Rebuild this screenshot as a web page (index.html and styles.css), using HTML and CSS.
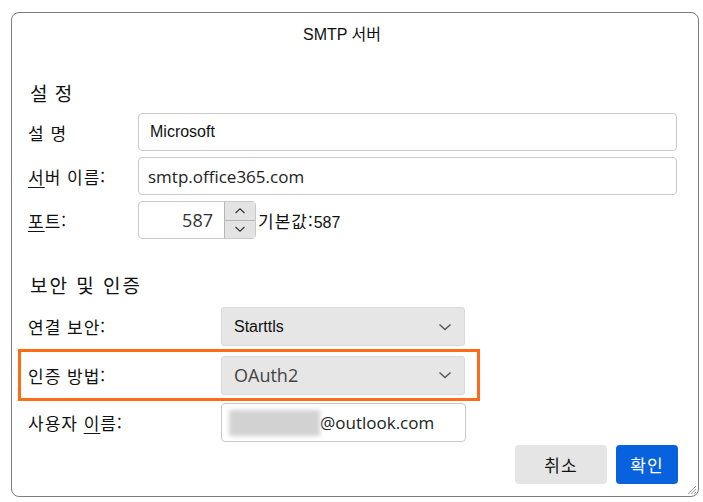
FILE: index.html
```html
<!DOCTYPE html>
<html lang="ko">
<head>
    <meta charset="UTF-8">
    <meta name="viewport" content="width=device-width, initial-scale=1.0">
    <title>SMTP 서버</title>
    <link rel="stylesheet" href="styles.css">
</head>
<body>
<div class="dialog">
    <div class="title">SMTP 서버</div>

    <div class="content">
        <div class="section-title">설 정</div>

        <div class="form-grid">
            <label for="desc">설 명</label>
            <input type="text" id="desc" class="form-control" value="Microsoft">

            <label for="server"><u>서</u>버 이름:</label>
            <input type="text" id="server" class="form-control server" value="smtp.office365.com">

            <label for="port"><u>포</u>트:</label>
            <div class="port-row">
                <div class="spin">
                    <span class="spin-value">587</span>
                    <div class="spin-buttons">
                        <span class="spin-btn">
                            <svg width="12" height="8" viewBox="0 0 12 8"><path d="M1.5 6 L6 1.8 L10.5 6" fill="none" stroke="#333" stroke-width="1.2"/></svg>
                        </span>
                        <span class="spin-btn">
                            <svg width="12" height="8" viewBox="0 0 12 8"><path d="M1.5 2 L6 6.2 L10.5 2" fill="none" stroke="#333" stroke-width="1.2"/></svg>
                        </span>
                    </div>
                </div>
                <span class="hint">기본값:<span class="num">587</span></span>
            </div>
        </div>

        <div class="section-title second">보안 및 인증</div>

        <div class="sec-row first">
            <label>연결 보안:</label>
            <div class="select">
                <span>Starttls</span>
                <svg width="14" height="8" viewBox="0 0 14 8"><path d="M1.5 1.5 L7 6.5 L12.5 1.5" fill="none" stroke="#555" stroke-width="1.4"/></svg>
            </div>
        </div>

        <div class="sec-row highlight">
            <label>인증 방법:</label>
            <div class="select oauth">
                <span>OAuth2</span>
                <svg width="14" height="8" viewBox="0 0 14 8"><path d="M1.5 1.5 L7 6.5 L12.5 1.5" fill="none" stroke="#555" stroke-width="1.4"/></svg>
            </div>
        </div>

        <div class="sec-row user">
            <label>사용자 <u>이</u>름:</label>
            <div class="user-input">
                <span class="blurred"></span>
                <span class="mail">@outlook.com</span>
            </div>
        </div>

        <div class="buttons">
            <button class="btn cancel">취소</button>
            <button class="btn ok">확인</button>
        </div>
    </div>

    <svg class="grip" width="12" height="12" viewBox="0 0 12 12">
        <path d="M11 3 L3 11 M11 6 L6 11 M11 9 L9 11" stroke="#999" stroke-width="1"/>
    </svg>
</div>
</body>
</html>
```

FILE: styles.css
```css
body {
    margin: 0;
    background-color: #ffffff;
    font-family: "Liberation Sans", "Noto Sans CJK KR", sans-serif;
    color: #111;
}

.dialog {
    position: relative;
    box-sizing: border-box;
    width: 688px;
    height: 485px;
    margin: 12px 0 0 11px;
    border: 1px solid #7c7c7c;
    border-radius: 8px;
    background-color: #fff;
}

.title {
    padding: 12px 26px 0 0;
    line-height: 20px;
    font-size: 16px;
    text-align: center;
}

.content {
    padding: 0 20px 0 16px;
}

.section-title {
    margin-top: 36px;
    padding-left: 2px;
    line-height: 24px;
    font-size: 19px;
    letter-spacing: 1px;
    font-family: "Noto Sans CJK KR", sans-serif;
}

.section-title.second {
    margin-top: 34px;
    letter-spacing: 2px;
}

label {
    font-family: "Noto Sans CJK KR", sans-serif;
    font-size: 17px;
    letter-spacing: 1px;
    color: #111;
}

u {
    text-underline-offset: 3px;
}

.form-grid {
    display: grid;
    grid-template-columns: 110px 539px;
    grid-auto-rows: 38px;
    row-gap: 6px;
    align-items: center;
    margin-top: 8px;
}

.form-control {
    box-sizing: border-box;
    height: 38px;
    width: 100%;
    padding: 0 11px;
    border: 1px solid #c9c9c9;
    border-radius: 4px;
    font-family: "Liberation Sans", sans-serif;
    font-size: 16px;
    color: #111;
}

.form-control.server {
    padding-left: 9px;
    font-family: "Open Sans", sans-serif;
    font-size: 17px;
    color: #222;
}

.port-row {
    display: flex;
    align-items: center;
    gap: 2px;
}

.spin {
    box-sizing: border-box;
    display: flex;
    width: 118px;
    height: 38px;
    border: 1px solid #c9c9c9;
    border-radius: 4px;
}

.spin-value {
    flex: 1;
    padding-right: 11px;
    text-align: right;
    line-height: 36px;
    font-family: "Open Sans", sans-serif;
    font-size: 18px;
    color: #333;
}

.spin-buttons {
    display: flex;
    flex-direction: column;
    width: 30px;
    border-left: 1px solid #b5b5b5;
}

.spin-btn {
    flex: 1;
    display: flex;
    align-items: center;
    justify-content: center;
    background-color: #e3e3e3;
}

.spin-btn + .spin-btn {
    border-top: 1px solid #b5b5b5;
}

.hint {
    font-family: "Noto Sans CJK KR", sans-serif;
    font-size: 17px;
    letter-spacing: 1px;
}

.hint .num {
    font-family: "Liberation Sans", sans-serif;
    font-size: 16px;
    letter-spacing: 0;
}

.sec-row {
    display: flex;
    align-items: center;
    height: 39px;
}

.sec-row label {
    width: 193px;
}

.sec-row.first {
    margin-top: 10px;
}

.select {
    box-sizing: border-box;
    display: flex;
    align-items: center;
    justify-content: space-between;
    width: 244px;
    height: 39px;
    padding: 0 12px 0 12px;
    border: 1px solid #dadada;
    border-radius: 3px;
    background-color: #e6e6e6;
    font-size: 16px;
}

.select.oauth span {
    font-family: "Open Sans", sans-serif;
    font-size: 18px;
    color: #444;
}

.highlight {
    box-sizing: border-box;
    width: 462px;
    height: 52px;
    margin: 3px 0 0 -10px;
    padding: 0 12px 0 7px;
    border: 3px solid #ff6b17;
}

.user {
    margin-top: 2px;
}

.user-input {
    box-sizing: border-box;
    display: flex;
    align-items: center;
    width: 245px;
    height: 39px;
    padding-left: 7px;
    border: 1px solid #c9c9c9;
    border-radius: 4px;
    overflow: hidden;
}

.blurred {
    width: 91px;
    height: 26px;
    background-color: #d2d2d2;
    filter: blur(2px);
}

.mail {
    font-family: "Open Sans", sans-serif;
    font-size: 17px;
    color: #222;
}

.buttons {
    display: flex;
    justify-content: flex-end;
    gap: 9px;
    margin-top: 3px;
}

.btn {
    height: 39px;
    border: none;
    border-radius: 4px;
    font-family: "Noto Sans CJK KR", sans-serif;
    font-size: 17px;
    letter-spacing: 1px;
}

.cancel {
    width: 92px;
    background-color: #e5e5e5;
    color: #111;
}

.ok {
    width: 62px;
    background-color: #0862de;
    color: #fff;
}

.grip {
    position: absolute;
    right: 1px;
    bottom: 1px;
}
```
